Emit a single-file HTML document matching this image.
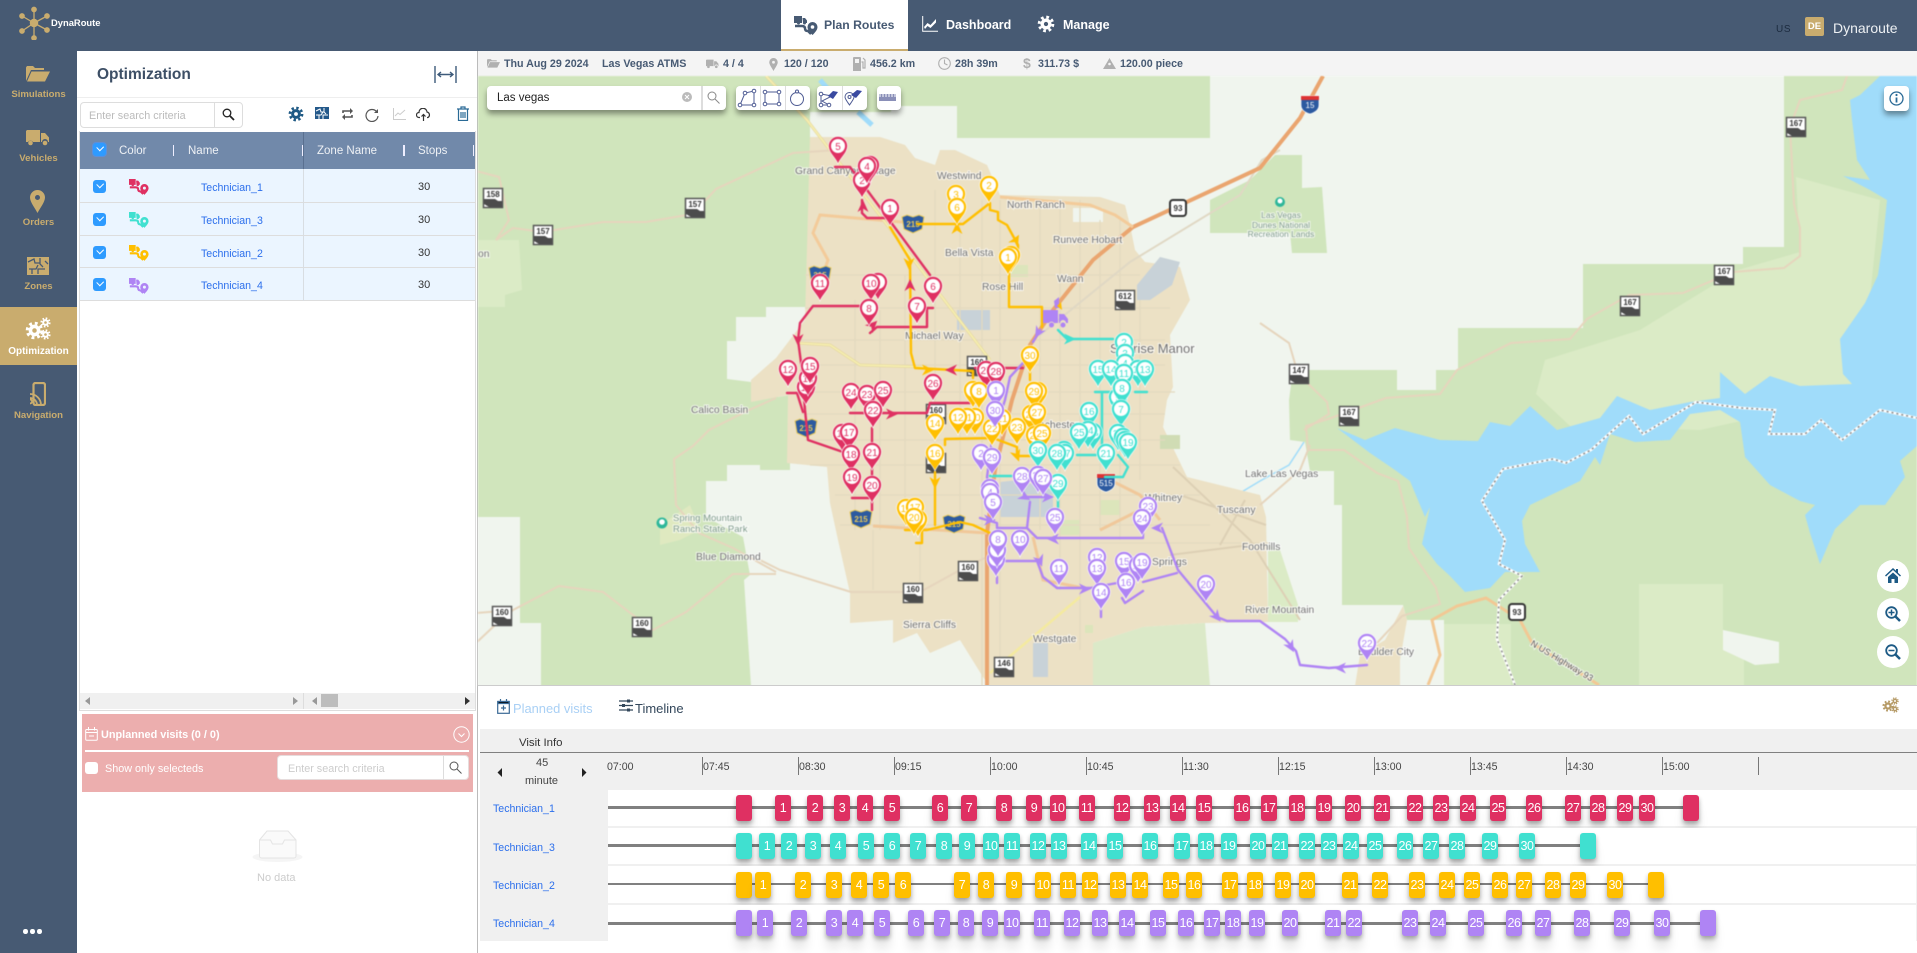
<!DOCTYPE html>
<html><head><meta charset="utf-8"><title>DynaRoute</title>
<style>
html,body{margin:0;padding:0}
body{position:relative;width:1917px;height:953px;overflow:hidden;background:#fff;font-family:"Liberation Sans",sans-serif;color:#333}
.a{position:absolute}
.t{position:absolute;white-space:nowrap;line-height:1;margin-top:1px}
svg{overflow:hidden}
.nav{font-weight:bold;font-size:12.5px;color:#fff}
.st{font-weight:bold;font-size:10.7px;color:#475a73;top:58px}
.sb{left:0;width:77px;text-align:center;font-weight:bold;font-size:9.6px;color:#c9ac6e}
.th{font-size:11.5px;color:#eef1f5;top:145px}
.sep{position:absolute;top:145px;height:11px;width:1px;background:#eef}
.tr{position:absolute;left:80px;width:395px;background:#ebf5ff;border-bottom:1.5px solid #ddd;box-sizing:border-box}
.cb{position:absolute;width:13px;height:13px;background:#2e9bff;border-radius:3px}
.cb:after{content:"";position:absolute;left:3.5px;top:2px;width:5px;height:3.5px;border-left:1.6px solid #fff;border-bottom:1.6px solid #fff;transform:rotate(-45deg)}
.tn{font-size:10.6px;color:#2c6fec}
.tk{position:absolute;top:757px;height:18px;width:1px;background:#777}
.tl{font-size:10.6px;color:#444;top:761px}
.r{position:absolute;left:608px;width:1308px;background:#fff}
.r i{position:absolute;left:0;height:3px;background:#808080}
.r b{position:absolute;width:16px;height:26px;border-radius:3px;color:#fff;font:normal 12.5px/26px "Liberation Sans",sans-serif;letter-spacing:-.4px;text-align:center;box-shadow:0 3px 5px rgba(0,0,0,.32),0 13px 10px rgba(0,0,0,.09)}
.r1 b{background:#df3062}.r2 b{background:#40e0d0}.r3 b{background:#ffbf00}.r4 b{background:#af84f4}
.M text{font:10px "Liberation Sans",sans-serif;text-anchor:middle}
.L text{font:10.3px "Liberation Sans",sans-serif;fill:#707070;paint-order:stroke;stroke:#fff;stroke-width:2px;stroke-opacity:.7}
.S text{font:bold 8px "Liberation Sans",sans-serif;text-anchor:middle;fill:#333}
.Y text{font:bold 8px "Liberation Sans",sans-serif;text-anchor:middle;fill:#e8c95a}
.W text{font:8px "Liberation Sans",sans-serif;text-anchor:middle;fill:#fff}
.rt{fill:none;stroke-width:2.4;stroke-linejoin:round;stroke-linecap:round}
.rd{fill:none;stroke:#e3d9bf;stroke-width:1.3}
.bt{position:absolute;background:#fff;box-shadow:0 4px 6px rgba(0,0,0,.4)}
</style></head><body>

<svg width="0" height="0" class="a"><defs>
<symbol id="ti" viewBox="0 0 24 20"><path fill="currentColor" d="M0 1h8v7H6a1.5 1.5 0 0 1-3 0H0zM8.5 3H11l2 2.5V8h-1a1.5 1.5 0 0 1-3 0z"/><path d="M1 11h7q3 0 3 2.5t3 2.5l3 3" fill="none" stroke="currentColor" stroke-width="2.5"/><path fill="currentColor" fill-rule="evenodd" d="M18.5 7a5 5 0 0 1 5 5c0 3-3 6-5 8-2-2-5-5-5-8a5 5 0 0 1 5-5zm0 3.2a1.8 1.8 0 1 0 0 3.6 1.8 1.8 0 0 0 0-3.6z"/></symbol>
<symbol id="gr" viewBox="-8 -8 16 16"><circle r="3.4" fill="none" stroke="currentColor" stroke-width="3"/><circle r="6.1" fill="none" stroke="currentColor" stroke-width="2.6" stroke-dasharray="2.4 2.4"/></symbol>
</defs></svg>

<!-- header -->
<div class="a" style="left:0;top:0;width:1917px;height:51px;background:#475a73"></div>
<svg class="a" style="left:18px;top:6px" width="32" height="34" viewBox="0 0 32 34"><g stroke="#c9ac6e" stroke-width="1.3" fill="#c9ac6e"><line x1="16" y1="17" x2="16" y2="3"/><line x1="16" y1="17" x2="4" y2="10"/><line x1="16" y1="17" x2="29" y2="10"/><line x1="16" y1="17" x2="4" y2="25"/><line x1="16" y1="17" x2="29" y2="24"/><line x1="16" y1="17" x2="16" y2="32"/><circle cx="16" cy="17" r="3.6"/><circle cx="16" cy="3.5" r="2.2"/><circle cx="4" cy="10" r="2.2"/><circle cx="29" cy="10" r="2.2"/><circle cx="4" cy="25" r="2.2"/><circle cx="29" cy="24" r="2.2"/><circle cx="16" cy="32" r="2.2"/></g></svg>
<div class="t" style="left:51px;top:17px;font-weight:bold;font-size:9.4px;color:#fff">DynaRoute</div>
<div class="a" style="left:781px;top:0;width:127px;height:49px;background:#fff;border-bottom:2px solid #c9ac6e"></div>
<svg class="a" style="left:794px;top:15px;color:#475a73" width="24" height="20"><use href="#ti"/></svg>
<div class="t nav" style="left:824px;top:18px;color:#475a73;font-size:12.2px">Plan Routes</div>
<svg class="a" style="left:922px;top:16px" width="16" height="16" viewBox="0 0 16 16"><path d="M.7 0v15.3H16" fill="none" stroke="#fff" stroke-width="1"/><path d="M2 11l3.5-4 3 2L14 3v3.5L8.500 12 5.500 10 3 13z" fill="#fff"/></svg>
<div class="t nav" style="left:946px;top:18px">Dashboard</div>
<svg class="a" style="left:1037px;top:15px;color:#fff" width="18" height="18"><use href="#gr"/></svg>
<div class="t nav" style="left:1063px;top:18px">Manage</div>
<div class="t" style="left:1776px;top:24px;font-size:10px;color:#1c2b3f;letter-spacing:.7px">US</div>
<div class="a" style="left:1805px;top:17px;width:19px;height:19px;background:#c9ac6e;border-radius:2px;color:#fff;font:bold 9.5px/19px 'Liberation Sans',sans-serif;text-align:center">DE</div>
<div class="t" style="left:1833px;top:20px;font-size:14px;color:#edf0f3">Dynaroute</div>

<!-- sidebar -->
<div class="a" style="left:0;top:51px;width:77px;height:902px;background:#475a73"></div>
<svg class="a" style="left:26px;top:66px" width="24" height="16" viewBox="0 0 24 16"><path d="M0 15V1.500L1 0h6l2 2h9v2H5zM5.500 5.500H24L19 15.500H1z" fill="#c9ac6e"/></svg>
<div class="t sb" style="top:89px">Simulations</div>
<svg class="a" style="left:26px;top:130px" width="24" height="16" viewBox="0 0 24 16"><path d="M1 0h13v12H7a3 3 0 0 0-5 0H0V1zM15 3h4l4 4.500V12h-1a3 3 0 0 0-6 0h-1z" fill="#c9ac6e"/><circle cx="4.500" cy="13" r="2.300" fill="#c9ac6e"/><circle cx="19" cy="13" r="2.300" fill="#c9ac6e"/></svg>
<div class="t sb" style="top:153px">Vehicles</div>
<svg class="a" style="left:30px;top:190px" width="15" height="23" viewBox="0 0 15 23"><path fill-rule="evenodd" fill="#c9ac6e" d="M7.500 0A7.500 7.500 0 0 1 15 7.500C15 12 10 18 7.500 23 5 18 0 12 0 7.500A7.500 7.500 0 0 1 7.500 0zm0 5a2.500 2.500 0 1 0 0 5 2.500 2.500 0 0 0 0-5z"/></svg>
<div class="t sb" style="top:217px">Orders</div>
<svg class="a" style="left:27px;top:257px" width="22" height="19" viewBox="0 0 22 19"><rect width="22" height="18" fill="#c9ac6e"/><path d="M1 5l6-3 1 4 5 0M13 1v6l3 3M2 12h7l2-4M11 17v-5l7 0M5 12v5M18 4l3 3" stroke="#475a73" stroke-width="1.300" fill="none"/></svg>
<div class="t sb" style="top:281px">Zones</div>
<div class="a" style="left:0;top:307px;width:77px;height:58px;background:#c9ac6e"></div>
<svg class="a" style="left:24px;top:316px;color:#fff" width="28" height="26" viewBox="0 0 28 26"><use href="#gr" x="1" y="5" width="19" height="19"/><use href="#gr" x="16" y="1" width="11" height="11"/><use href="#gr" x="16" y="13" width="11" height="11"/></svg>
<div class="t sb" style="top:346px;color:#fff;font-size:10px">Optimization</div>
<svg class="a" style="left:30px;top:382px" width="16" height="24" viewBox="0 0 16 24"><rect x="3.500" y="1" width="11.500" height="22" rx="2" fill="none" stroke="#c9ac6e" stroke-width="2.200"/><path d="M0 21.500a2 2 0 1 1 .1 0zM0 16a7 7 0 0 1 7 7M0 12a11 11 0 0 1 11 11" stroke="#c9ac6e" stroke-width="1.800" fill="#c9ac6e" fill-opacity="0"/></svg>
<div class="t sb" style="top:410px">Navigation</div>
<div class="a" style="left:23px;top:929px;width:4.500px;height:4.500px;border-radius:50%;background:#fff"></div>
<div class="a" style="left:30px;top:929px;width:4.500px;height:4.500px;border-radius:50%;background:#fff"></div>
<div class="a" style="left:37px;top:929px;width:4.500px;height:4.500px;border-radius:50%;background:#fff"></div>

<!-- left panel -->
<div class="a" style="left:77px;top:51px;width:400px;height:902px;background:#fff;border-right:1px solid #bbb;box-sizing:content-box"></div>
<div class="t" style="left:97px;top:66px;font-weight:bold;font-size:15.500px;color:#3d4f66">Optimization</div>
<svg class="a" style="left:434px;top:66px" width="23" height="18" viewBox="0 0 23 18"><path d="M1 0v17M22 0v17M4 8.500h15M7 6l-3 2.500L7 11M16 6l3 2.500-3 2.500" stroke="#3d5a7a" stroke-width="1.400" fill="none"/></svg>
<div class="a" style="left:77px;top:97px;width:400px;height:1px;background:#eee"></div>
<div class="a" style="left:80px;top:102px;width:163px;height:26px;border:1px solid #ddd;border-radius:4px;box-sizing:border-box"></div>
<div class="a" style="left:214px;top:103px;width:1px;height:24px;background:#ddd"></div>
<div class="t" style="left:89px;top:110px;font-size:10.800px;color:#bbb">Enter search criteria</div>
<svg class="a" style="left:222px;top:108px" width="13" height="13" viewBox="0 0 13 13"><circle cx="5" cy="5" r="3.800" fill="none" stroke="#222" stroke-width="1.300"/><path d="M8 8l4 4" stroke="#222" stroke-width="1.800"/></svg>
<svg class="a" style="left:288px;top:106px;color:#1f5a85" width="16" height="16"><use href="#gr"/></svg>
<svg class="a" style="left:315px;top:107px" width="14" height="13" viewBox="0 0 14 13"><rect width="14" height="12" fill="#24598a"/><path d="M1 4l4-2 1 3h3M9 1v4l2 2M1 8h5l2-3M8 12V8h5M4 8v4" stroke="#fff" stroke-width="1" fill="none"/></svg>
<svg class="a" style="left:341px;top:108px" width="13" height="12" viewBox="0 0 13 12"><path d="M2 5V3h8M11 7v2H3" stroke="#555" stroke-width="1.600" fill="none"/><path d="M9 0l3 3-3 3zM4 6L1 9l3 3z" fill="#555"/></svg>
<svg class="a" style="left:365px;top:108px" width="14" height="14" viewBox="0 0 14 14"><path d="M11.500 3.500A6 6 0 1 0 13 8" stroke="#555" stroke-width="1.200" fill="none"/><path d="M13 1v4H9z" fill="#555"/></svg>
<svg class="a" style="left:393px;top:108px" width="13" height="12" viewBox="0 0 13 12"><path d="M.5 0v11.500H13M2 8l3-3 2 1.500L12 2" stroke="#ccc" stroke-width="1" fill="none"/></svg>
<svg class="a" style="left:416px;top:108px" width="15" height="13" viewBox="0 0 15 13"><path d="M4 9.500H3a2.500 2.500 0 0 1 0-5 4 4 0 0 1 8-.5 3 3 0 0 1 1 5.500h-1M7.500 6v7M5.500 8.500l2-2 2 2" stroke="#333" stroke-width="1.200" fill="none"/></svg>
<svg class="a" style="left:457px;top:106px" width="12" height="15" viewBox="0 0 12 15"><path d="M0 3h12M4 3V1h4v2M1.500 3.500v11h9v-11M4 6v6M6 6v6M8 6v6" stroke="#2a6a96" stroke-width="1.200" fill="none"/></svg>

<div class="a" style="left:79px;top:131px;width:397px;height:580px;border:1px solid #ddd;border-top:0;box-sizing:border-box"></div>
<div class="a" style="left:80px;top:132px;width:395px;height:37px;background:#7189aa"></div>
<div class="a" style="left:303px;top:132px;width:1px;height:37px;background:#5a7090"></div>
<div class="cb" style="left:93px;top:143px;outline:1px solid #5a8fdc"></div>
<div class="t th" style="left:119px">Color</div><div class="sep" style="left:173px"></div>
<div class="t th" style="left:188px">Name</div><div class="sep" style="left:302px"></div>
<div class="t th" style="left:317px">Zone Name</div><div class="sep" style="left:403px;width:2px"></div>
<div class="t th" style="left:418px">Stops</div><div class="sep" style="left:473px"></div>

<div class="tr" style="top:169px;height:34px"></div><div class="tr" style="top:203px;height:33px"></div><div class="tr" style="top:236px;height:32px"></div><div class="tr" style="top:268px;height:33px"></div>
<div class="a" style="left:303px;top:169px;width:1px;height:132px;background:#d8dde2"></div>

<div class="cb" style="left:93px;top:180px"></div><div class="cb" style="left:93px;top:213px"></div><div class="cb" style="left:93px;top:246px"></div><div class="cb" style="left:93px;top:278px"></div>
<svg class="a" style="left:129px;top:178px;color:#df3062" width="20" height="17"><use href="#ti"/></svg>
<svg class="a" style="left:129px;top:211px;color:#40e0d0" width="20" height="17"><use href="#ti"/></svg>
<svg class="a" style="left:129px;top:244px;color:#ffbf00" width="20" height="17"><use href="#ti"/></svg>
<svg class="a" style="left:129px;top:277px;color:#af84f4" width="20" height="17"><use href="#ti"/></svg>
<div class="t tn" style="left:201px;top:182px">Technician_1</div><div class="t" style="left:418px;top:181px;font-size:11px">30</div>
<div class="t tn" style="left:201px;top:215px">Technician_3</div><div class="t" style="left:418px;top:214px;font-size:11px">30</div>
<div class="t tn" style="left:201px;top:248px">Technician_2</div><div class="t" style="left:418px;top:247px;font-size:11px">30</div>
<div class="t tn" style="left:201px;top:280px">Technician_4</div><div class="t" style="left:418px;top:279px;font-size:11px">30</div>

<div class="a" style="left:80px;top:693px;width:395px;height:16px;background:#f0f0f0"></div>
<div class="a" style="left:303px;top:693px;width:1px;height:16px;background:#ddd"></div>
<svg class="a" style="left:84px;top:696px" width="390" height="10" viewBox="0 0 390 10"><path d="M6 1L1 5l5 4z" fill="#999"/><path d="M209 1l5 4-5 4z" fill="#999"/><path d="M233 1l-5 4 5 4z" fill="#999"/><path d="M381 1l5 4-5 4z" fill="#333"/></svg>
<div class="a" style="left:321px;top:694px;width:17px;height:13px;background:#bdbdbd"></div>

<div class="a" style="left:82px;top:714px;width:391px;height:78px;background:#ecaeae"></div>
<svg class="a" style="left:85px;top:727px" width="13" height="14" viewBox="0 0 13 14"><rect x=".7" y="2.500" width="11.600" height="10.800" rx="1" fill="none" stroke="#fff" stroke-width="1"/><path d="M1 5.500h11M3.500 0v3.500M9.500 0v3.500M4 9h5" stroke="#fff" stroke-width="1"/></svg>
<div class="t" style="left:101px;top:729px;font-weight:bold;font-size:10.900px;color:#fff">Unplanned visits (0 / 0)</div>
<svg class="a" style="left:453px;top:726px" width="17" height="17" viewBox="0 0 17 17"><circle cx="8.500" cy="8.500" r="7.700" fill="none" stroke="#fff" stroke-width="1"/><path d="M5.500 7.500l3 3 3-3" fill="none" stroke="#fff" stroke-width="1"/></svg>
<div class="a" style="left:85px;top:750px;width:384px;height:2px;background:#fff"></div>
<div class="a" style="left:85px;top:762px;width:13px;height:12px;background:#fff;border-radius:3px"></div>
<div class="t" style="left:105px;top:763px;font-size:10.800px;color:#fff">Show only selecteds</div>
<div class="a" style="left:277px;top:755px;width:192px;height:25px;background:#fff;border-radius:4px;border:1px solid #e6dcdc;box-sizing:border-box"></div>
<div class="a" style="left:443px;top:756px;width:1px;height:23px;background:#ddd"></div>
<div class="t" style="left:288px;top:763px;font-size:10.800px;color:#ccc">Enter search criteria</div>
<svg class="a" style="left:449px;top:761px" width="13" height="13" viewBox="0 0 13 13"><circle cx="5" cy="5" r="4" fill="none" stroke="#555" stroke-width="1"/><path d="M8 8l4.500 4.500" stroke="#555" stroke-width="1"/></svg>

<svg class="a" style="left:252px;top:829px" width="52" height="34" viewBox="0 0 52 34"><ellipse cx="25.500" cy="28" rx="25" ry="5" fill="#f5f5f5"/><path d="M7.500 11L15 2h21l8 9v16a2 2 0 0 1-2 2H9.500a2 2 0 0 1-2-2z" fill="#fafafa" stroke="#e4e4e4" stroke-width="1"/><path d="M7.500 11h11l2 4h10l2-4h11.500" fill="none" stroke="#e4e4e4" stroke-width="1"/></svg>
<div class="t" style="left:257px;top:872px;font-size:11px;color:#ccc">No data</div>

<!-- status bar -->
<div class="a" style="left:478px;top:51px;width:1439px;height:25px;background:#f4f4f4"></div>
<svg class="a" style="left:487px;top:58px" width="13" height="11" viewBox="0 0 24 16"><path d="M0 15V1.500L1 0h6l2 2h9v2H5zM5.500 5.500H24L19 15.500H1z" fill="#b0b0b0"/></svg>
<div class="t st" style="left:504px">Thu Aug 29 2024</div><div class="t st" style="left:602px">Las Vegas ATMS</div>
<svg class="a" style="left:706px;top:59px" width="13" height="10" viewBox="0 0 24 16"><path d="M1 0h13v12H7a3 3 0 0 0-5 0H0V1zM15 3h4l4 4.500V12h-1a3 3 0 0 0-6 0h-1z" fill="#b0b0b0"/><circle cx="4.500" cy="13" r="2.500" fill="#b0b0b0"/><circle cx="19" cy="13" r="2.500" fill="#b0b0b0"/></svg>
<div class="t st" style="left:723px">4 / 4</div>
<svg class="a" style="left:769px;top:58px" width="9" height="13" viewBox="0 0 15 23"><path fill-rule="evenodd" fill="#b0b0b0" d="M7.500 0A7.500 7.500 0 0 1 15 7.500C15 12 10 18 7.500 23 5 18 0 12 0 7.500A7.500 7.500 0 0 1 7.500 0zm0 5a2.500 2.500 0 1 0 0 5 2.500 2.500 0 0 0 0-5z"/></svg>
<div class="t st" style="left:784px">120 / 120</div>
<svg class="a" style="left:853px;top:57px" width="13" height="14" viewBox="0 0 13 14"><path d="M0 1a1 1 0 0 1 1-1h6a1 1 0 0 1 1 1v13H0zM2 2v4h4V2z" fill="#b0b0b0" fill-rule="evenodd"/><path d="M8.500 5h1.500v6h2V3L10 1" fill="none" stroke="#b0b0b0" stroke-width="1.200"/></svg>
<div class="t st" style="left:870px">456.2 km</div>
<svg class="a" style="left:938px;top:57px" width="13" height="13" viewBox="0 0 13 13"><circle cx="6.500" cy="6.500" r="5.800" fill="none" stroke="#b0b0b0" stroke-width="1.100"/><path d="M6.500 2.500v4l3 1.500" fill="none" stroke="#b0b0b0" stroke-width="1.100"/></svg>
<div class="t st" style="left:955px">28h 39m</div>
<div class="t" style="left:1023px;top:55px;font-size:14px;font-weight:bold;color:#b0b0b0">$</div>
<div class="t st" style="left:1038px">311.73 $</div>
<svg class="a" style="left:1103px;top:58px" width="13" height="11" viewBox="0 0 13 11"><path d="M4.500 3.500L6.500 0l2 3.500L13 11H0z" fill="#b0b0b0"/><circle cx="6.500" cy="6" r="1.300" fill="#f4f4f4"/></svg>
<div class="t st" style="left:1120px">120.00 piece</div>

<!-- map -->
<svg class="a" style="left:478px;top:76px;filter:blur(.4px)" width="1439" height="610" viewBox="478 76 1439 610">
<defs>
<g id="m"><path stroke="#fff" stroke-width=".6" d="M0 0C-2-6-9.500-11-9.500-18A9.500 9.500 0 1 1 9.500-18C9.500-11 2-6 0 0Z"/><circle cy="-18" r="7" fill="#fff"/></g>
<path id="ar" d="M-6-5.500L6 0-6 5.500-2.500 0Z"/>
<g id="sh"><rect x="-9.500" y="-9.500" width="19" height="19" fill="#fff" stroke="#555" stroke-width="1.500"/><path d="M-9 1H2L5 3 9 3V9H-4L-9 6Z" fill="#4c4c4c"/></g>
<path id="bl" d="M-11-7L-6-9 0-7 6-9 11-7 9 5 0 9-9 5Z" fill="#2c5aa0" stroke="#e8c95a" stroke-width="1"/>
<g id="in"><path d="M-9-8H9V1C9 7 3 9 0 10-3 9-9 7-9 1Z" fill="#2c5aa0" stroke="#fff" stroke-width=".7"/><path d="M-9-8H9V-4H-9Z" fill="#d33"/></g>
</defs>
<rect x="478" y="76" width="1439" height="610" fill="#f0f5ee"/>
<g fill="#d0e5bc">
<polygon points="477,76 891,76 891,112 810,112 810,307 766,307 766,317 736,317 736,341 727,341 727,379 751,382 787,402 787,465 727,465 727,481 706,481 706,517 743,537 750,575 744,580 751,686 541,686 541,623 520,623 520,517 477,517"/>
<polygon points="891,76 1210,76 1210,138 957,138 957,106 891,106"/>
<polygon points="1275,155 1302,155 1302,188 1322,187 1327,253 1292,253 1290,233 1210,233 1210,200 1250,180"/>
<polygon points="1784,76 1784,247 1743,247 1743,264 1583,264 1583,328 1458,328 1458,370 1436,370 1436,390 1397,390 1397,370 1293,370 1289,400 1290,440 1305,442 1310,471 1334,471 1334,505 1342,505 1342,605 1403,605 1407,620 1444,620 1444,686 1917,686 1917,76"/>
<polygon points="760,400 790,395 790,470 760,470" />
</g>
<g fill="#dbebc6">
<polygon points="478,240 519,240 522,290 505,295 505,307 478,307"/>
<polygon points="1880,200 1796,177 1800,252 1738,270 1640,330 1545,360 1536,394 1570,426 1700,430 1860,395"/>
<polygon points="1639,584 1723,584 1723,630 1744,640 1744,686 1639,686"/>
<polygon points="1444,624 1511,624 1511,686 1444,686"/>
<polygon points="1268,545 1280,550 1298,605 1298,622 1268,622"/>
</g>
<polygon points="1723,630 1779,642 1779,663 1755,665 1723,650" fill="#f0f5ee"/>
<polygon points="660,525 690,505 700,530 680,540 660,545" fill="#dfe9c0"/>
<!-- lake -->
<polygon fill="#a0dcfa" points="1880,76 1860,95 1850,100 1852,120 1857,160 1870,180 1843,176 1870,190 1887,200 1883,240 1878,275 1865,303 1840,339 1843,374 1852,384 1800,386 1770,376 1745,394 1720,372 1720,398 1690,402 1650,410 1617,396 1600,418 1557,430 1530,406 1510,426 1490,422 1478,441 1440,440 1395,428 1365,440 1337,428 1370,453 1395,470 1410,481 1420,505 1425,517 1430,507 1422,544 1437,564 1450,576 1465,592 1490,588 1505,572 1540,572 1525,544 1522,521 1530,505 1555,493 1580,481 1595,457 1600,465 1610,434 1635,442 1670,440 1690,414 1720,410 1740,422 1745,457 1770,485 1800,501 1815,505 1805,515 1810,533 1820,564 1835,529 1860,505 1885,505 1905,477 1900,461 1917,446 1917,76"/>
<path d="M820 80L835 97M858 112L872 125" stroke="#a0dcfa" stroke-width="5" fill="none"/>
<path d="M1173 467L1200 488 1240 493 1260 481 1289 465 1304 442" stroke="#a0dcfa" stroke-width="1.500" fill="none"/>
<!-- city -->
<polygon fill="#ece1c5" points="810,137 880,137 905,145 915,158 935,165 940,150 955,150 987,165 1000,195 1100,197 1125,205 1130,225 1135,250 1145,262 1180,267 1190,300 1170,335 1173,387 1167,400 1163,427 1187,477 1260,495 1266,517 1268,622 1205,623 1143,627 1093,643 1093,686 990,686 983,677 960,640 930,653 917,633 893,643 893,620 850,623 850,593 838,540 830,503 827,467 787,463 788,395 751,402 751,380 776,358 805,320"/>
<polygon fill="#ece1c5" points="1403,606 1385,640 1360,655 1355,686 1400,686 1400,660 1407,620"/>
<polygon fill="#dbe9c8" points="1093,643 1143,627 1205,623 1210,686 1093,686"/>
<polygon fill="#f0f5ee" points="1073,208 1103,208 1103,222 1073,222"/>
<g fill="#c8d2d8">
<polygon points="1137,285 1160,257 1180,262 1172,285 1150,300 1137,300"/>
<rect x="957" y="310" width="33" height="20"/>
<polygon points="1000,482 1018,480 1053,490 1053,517 1000,517"/>
<rect x="1033" y="643" width="15" height="34"/>
</g>
<g fill="#dce5bb"><rect x="1010" y="265" width="18" height="12"/><rect x="1060" y="520" width="20" height="15"/><rect x="1100" y="500" width="20" height="15"/><rect x="1160" y="435" width="20" height="14" fill="#d0dcb4"/><rect x="1085" y="625" width="8" height="8"/></g>
<!-- grid -->
<g class="rd">
<path d="M805 275H1140M805 308H1170M800 340H1165M800 365H1165M795 392H1175M800 414H1165M805 440H1165M810 465H1180M835 495H1200M840 525H1210M1090 543H1270"/>
<path d="M855 300V530M880 310V530M905 275V530M935 190V530M960 200V520M982 200V690M1000 200V670M1040 200V530M1060 200V590M1080 200V650M1100 220V530M1120 220V540M1140 300V480M873 530V590M920 530V590"/>
</g>
<g fill="none">
<path d="M1040 335L1130 262 1240 195 1262 160 1280 150" stroke="#e0d8c4" stroke-width="2"/>
<path d="M1173 467L1250 540 1300 620" stroke="#ddd0b5" stroke-width="2"/>
<path d="M1180 495L1266 525M1220 545L1245 500M1170 555L1250 545" stroke="#ddd0b5" stroke-width="2"/>
<g stroke="#e6d5bd" stroke-width="2">
<path d="M476 171L499 177 509 220 496 240 513 228 543 232 603 222 646 222 693 214 716 189 776 161 793 153 837 150"/>
<path d="M776 398L749 410 709 430 693 446 674 459 676 505 699 533 733 548 776 572"/>
<path d="M851 592L780 570 760 560M776 574H733L686 612 653 630 629 612 603 592 559 586 513 610 476 613M476 643L493 627 513 610"/>
<path d="M850 592H920L960 570 987 557"/>
<path d="M1847 76L1842 90 1800 100 1790 127 1794 204 1800 228 1800 256 1784 268 1733 272 1683 293 1629 295 1587 319 1570 339 1511 343 1457 370 1440 394 1386 398 1331 418 1306 426 1308 450 1344 450 1377 473 1398 481 1407 517 1409 548 1436 588 1440 604 1402 616 1377 643"/>
<path d="M1260 323L1289 343 1298 374 1327 402 1329 414 1304 430"/>
<path d="M1260 505L1300 470 1310 445"/>
</g>
<path d="M1323 76L1300 118 1260 168 1133 227 1093 260 1053 310 1030 345 1012 400 995 470 987 533 987 686" stroke="#eaa56f" stroke-width="4"/>
<path d="M913 223L820 215 813 233 828 260 820 283M1000 197L1090 205 1115 215 1133 227" stroke="#f3cb9a" stroke-width="3"/>
<path d="M873 526L987 533M1033 537L1043 580 1083 588M1100 530L1150 505 1155 510" stroke="#f0c89a" stroke-width="3"/>
<path d="M1106 478L1140 495 1160 520" stroke="#f0c89a" stroke-width="3"/>
<path d="M766 76L807 120 990 360M797 343L830 345 860 365 927 367" stroke="#e6d8a0" stroke-width="3"/>
<path d="M766 76L807 120 990 360M797 343L830 345 860 365 927 367" stroke="#f6efb0" stroke-width="1.600"/>
<path d="M1080 597L990 673" stroke="#f4ea9f" stroke-width="2.500"/>
<path d="M1428 685L1440 655 1432 620 1457 606 1486 598 1520 620 1532 643 1599 685" stroke="#f2c894" stroke-width="3"/>
<path d="M1515 685L1497 639 1499 600 1522 576 1499 564 1505 540 1482 501 1503 469 1553 459 1566 463 1591 450 1629 416 1643 434 1696 402 1742 408 1775 410 1769 434 1805 434 1821 420 1842 440 1880 410 1917 418" stroke="#fff" stroke-width="2.500"/>
<path d="M1515 685L1497 639 1499 600 1522 576 1499 564 1505 540 1482 501 1503 469 1553 459 1566 463 1591 450 1629 416 1643 434 1696 402 1742 408 1775 410 1769 434 1805 434 1821 420 1842 440 1880 410 1917 418" stroke="#888" stroke-width="1.500" stroke-dasharray="2 3"/>
</g>
<!-- shields -->
<g class="S">
<use href="#sh" x="493" y="198"/><text x="493" y="197">158</text>
<use href="#sh" x="543" y="235"/><text x="543" y="234">157</text>
<use href="#sh" x="695" y="208"/><text x="695" y="207">157</text>
<use href="#sh" x="502" y="616"/><text x="502" y="615">160</text>
<use href="#sh" x="642" y="627"/><text x="642" y="626">160</text>
<use href="#sh" x="968" y="571"/><text x="968" y="570">160</text>
<use href="#sh" x="913" y="593"/><text x="913" y="592">160</text>
<use href="#sh" x="1004" y="667"/><text x="1004" y="666">146</text>
<use href="#sh" x="1125" y="300"/><text x="1125" y="299">612</text>
<use href="#sh" x="1796" y="127"/><text x="1796" y="126">167</text>
<use href="#sh" x="1724" y="275"/><text x="1724" y="274">167</text>
<use href="#sh" x="1630" y="306"/><text x="1630" y="305">167</text>
<use href="#sh" x="1349" y="416"/><text x="1349" y="415">167</text>
<use href="#sh" x="1299" y="374"/><text x="1299" y="373">147</text>
<use href="#sh" x="977" y="366"/><text x="977" y="365">160</text>
<use href="#sh" x="936" y="414"/><text x="936" y="413">160</text>
<use href="#sh" x="936" y="463"/><text x="936" y="462">160</text>
<rect x="1170" y="200" width="16" height="16" rx="3" fill="#fff" stroke="#333" stroke-width="2"/><text x="1178" y="211">93</text>
<rect x="1509" y="604" width="16" height="16" rx="3" fill="#fff" stroke="#333" stroke-width="2"/><text x="1517" y="615">93</text>
</g>
<g class="Y">
<use href="#bl" x="913" y="224"/><text x="913" y="227">215</text>
<use href="#bl" x="820" y="275"/><text x="820" y="278">215</text>
<use href="#bl" x="806" y="428"/><text x="806" y="431">215</text>
<use href="#bl" x="861" y="519"/><text x="861" y="522">215</text>
<use href="#bl" x="954" y="524"/><text x="954" y="527">215</text>
</g>
<g class="W"><use href="#in" x="1310" y="104"/><text x="1310" y="108">15</text><use href="#in" x="1106" y="482"/><text x="1106" y="486">515</text></g>
<!-- labels -->
<g class="L">
<text x="795" y="174">Grand Canyon Village</text>
<text x="937" y="179">Westwind</text>
<text x="1007" y="208">North Ranch</text>
<text x="1053" y="243">Runvee Hobart</text>
<text x="945" y="256">Bella Vista</text>
<text x="1057" y="282">Wann</text>
<text x="982" y="290">Rose Hill</text>
<text x="905" y="339">Michael Way</text>
<text x="1110" y="353" style="font-size:13px">Sunrise Manor</text>
<text x="1027" y="428">Winchester</text>
<text x="1145" y="501">Whitney</text>
<text x="1217" y="513">Tuscany</text>
<text x="1245" y="477">Lake Las Vegas</text>
<text x="1242" y="550">Foothills</text>
<text x="1152" y="565">Springs</text>
<text x="1245" y="613">River Mountain</text>
<text x="903" y="628">Sierra Cliffs</text>
<text x="1033" y="642">Westgate</text>
<text x="1358" y="655">Boulder City</text>
<text x="691" y="413">Calico Basin</text>
<text x="696" y="560">Blue Diamond</text>
<text x="478" y="257">on</text>
<text x="673" y="521" style="font-size:9.500px;fill:#7d9a8a">Spring Mountain</text>
<text x="673" y="532" style="font-size:9.500px;fill:#7d9a8a">Ranch State Park</text>
<text x="1281" y="218" text-anchor="middle" style="font-size:8.500px;fill:#7d9a8a">Las Vegas</text>
<text x="1281" y="228" text-anchor="middle" style="font-size:8.500px;fill:#7d9a8a">Dunes National</text>
<text x="1281" y="237" text-anchor="middle" style="font-size:8.500px;fill:#7d9a8a">Recreation Lands</text>
<text transform="translate(1530 645) rotate(31)" style="font-size:9px;fill:#555">N US Highway 93</text>
</g>
<circle cx="1280" cy="202" r="5" fill="#2fb79a"/><circle cx="1280" cy="201" r="2.500" fill="#fff"/>
<circle cx="662" cy="523" r="5.500" fill="#2fb79a"/><circle cx="662" cy="522" r="2.800" fill="#fff"/>

<!-- routes -->
<g class="rt" stroke="#df3062">
<path d="M835 167H850L930 275M862 200V213L867 218H890"/>
<path d="M862 306H813L800 323 798 340 802 370 805 410 808 440 843 452"/>
<path d="M870 333L877 327H927V308H933"/>
<path d="M787 393H797L803 412M850 413H927L930 403H973M975 368H1023M872 428V477M872 480V510M852 498H872"/>
</g>
<g class="rt" stroke="#ffbf00">
<path d="M917 224H963L990 203V210L998 212V220L1007 225 1018 245V260"/>
<path d="M890 227L910 260 911 353 915 368 973 371V378"/>
<path d="M1009 273V307H1042V327M1030 370V380"/>
<path d="M945 445V439L993 438 1017 447V456H1037"/>
<path d="M935 472V525M905 530H927L960 522 973 525 990 533M916 543H922V530"/>
</g>
<g class="rt" stroke="#40e0d0">
<path d="M1058 330L1067 339H1113M1095 392H1110M1135 392H1147M1102 393V453"/>
<path d="M990 476H1020M1077 455H1100M1118 455L1128 467 1123 477H1105M1058 500V507"/>
</g>
<g class="rt" stroke="#af84f4">
<path d="M1040 330L1033 342M1023 363L1010 377 1005 400 992 440 987 477 990 487"/>
<path d="M980 518L997 523V528H1027L1037 538H1143V533M1030 502L1027 528M1023 497H1050"/>
<path d="M1005 561H1037L1043 577 1057 588H1090L1117 583M997 577V583M1101 610V617"/>
<path d="M1122 598L1125 603 1143 591M1143 582L1177 573"/>
<path d="M1162 528L1178 570 1217 617 1227 621H1260L1285 639 1296 651 1300 665 1329 668 1367 665"/>
</g>
<!-- arrows -->
<g fill="#df3062">
<use href="#ar" transform="translate(863 206) rotate(-90)"/><use href="#ar" transform="translate(798 340) rotate(90)"/><use href="#ar" transform="translate(873 325) rotate(-45)"/><use href="#ar" transform="translate(892 414)"/><use href="#ar" transform="translate(951 370) rotate(180)"/><use href="#ar" transform="translate(910 285) rotate(-90)"/>
</g>
<g fill="#ffbf00">
<use href="#ar" transform="translate(957 228) rotate(-90)"/><use href="#ar" transform="translate(1016 240) rotate(-60)"/><use href="#ar" transform="translate(909 264) rotate(90)"/><use href="#ar" transform="translate(928 370)"/><use href="#ar" transform="translate(935 483) rotate(90)"/><use href="#ar" transform="translate(1017 456) rotate(70)"/>
</g>
<use href="#ar" fill="#40e0d0" transform="translate(1070 339)"/>
<g fill="#af84f4">
<use href="#ar" transform="translate(1038 333) rotate(120)"/><use href="#ar" transform="translate(1025 497) rotate(30)"/><use href="#ar" transform="translate(1048 497)"/><use href="#ar" transform="translate(990 520)"/><use href="#ar" transform="translate(1040 561) rotate(70)"/><use href="#ar" transform="translate(1085 589)"/><use href="#ar" transform="translate(1157 528) rotate(180)"/><use href="#ar" transform="translate(1053 539) rotate(180)"/><use href="#ar" transform="translate(1217 617) rotate(50)"/><use href="#ar" transform="translate(1291 647) rotate(60)"/><use href="#ar" transform="translate(1340 668) rotate(180)"/>
</g>
<!-- truck -->
<path d="M1043 310h15v13h-4a3 3 0 0 0-5 0h-6zM1059 314h5l4 5v4h-2a3 3 0 0 0-6 0h-1z" fill="#af84f4"/><circle cx="1051.500" cy="325" r="2.500" fill="#af84f4"/><circle cx="1063" cy="325" r="2.500" fill="#af84f4"/><path d="M1054 301l5-4v11h-4z" fill="#af84f4"/><path d="M1057 306l4-4 1 8z" fill="#ffbf00"/>

<!-- markers -->
<g class="M" fill="#df3062">
<use href="#m" x="838" y="164"/><text x="838" y="150">5</text>
<use href="#m" x="862" y="198"/><text x="862" y="184">2</text>
<use href="#m" x="870" y="183"/><text x="870" y="169">3</text>
<use href="#m" x="867" y="184"/><text x="867" y="170">4</text>
<use href="#m" x="890" y="226"/><text x="890" y="212">1</text>
<use href="#m" x="933" y="304"/><text x="933" y="290">6</text>
<use href="#m" x="820" y="301"/><text x="820" y="287">11</text>
<use href="#m" x="878" y="300"/><text x="878" y="286">9</text>
<use href="#m" x="871" y="301"/><text x="871" y="287">10</text>
<use href="#m" x="869" y="326"/><text x="869" y="312">8</text>
<use href="#m" x="917" y="324"/><text x="917" y="310">7</text>
<use href="#m" x="788" y="387"/><text x="788" y="373">12</text>
<use href="#m" x="806" y="405"/><text x="806" y="391">13</text>
<use href="#m" x="808" y="396"/><text x="808" y="382">14</text>
<use href="#m" x="810" y="384"/><text x="810" y="370">15</text>
<use href="#m" x="851" y="410"/><text x="851" y="396">24</text>
<use href="#m" x="867" y="412"/><text x="867" y="398">23</text>
<use href="#m" x="883" y="408"/><text x="883" y="394">25</text>
<use href="#m" x="873" y="428"/><text x="873" y="414">22</text>
<use href="#m" x="933" y="401"/><text x="933" y="387">26</text>
<use href="#m" x="986" y="388"/><text x="986" y="374">27</text>
<use href="#m" x="996" y="389"/><text x="996" y="375">28</text>
<use href="#m" x="842" y="451"/><text x="842" y="437">16</text>
<use href="#m" x="849" y="450"/><text x="849" y="436">17</text>
<use href="#m" x="851" y="472"/><text x="851" y="458">18</text>
<use href="#m" x="872" y="470"/><text x="872" y="456">21</text>
<use href="#m" x="852" y="495"/><text x="852" y="481">19</text>
<use href="#m" x="872" y="503"/><text x="872" y="489">20</text>
</g>
<g class="M" fill="#ffbf00">
<use href="#m" x="956" y="212"/><text x="956" y="198">3</text>
<use href="#m" x="957" y="225"/><text x="957" y="211">6</text>
<use href="#m" x="989" y="203"/><text x="989" y="189">2</text>
<use href="#m" x="1011" y="273"/><text x="1011" y="259">4</text>
<use href="#m" x="1008" y="275"/><text x="1008" y="261">1</text>
<use href="#m" x="1030" y="373"/><text x="1030" y="359">30</text>
<use href="#m" x="1038" y="409"/><text x="1038" y="395">28</text>
<use href="#m" x="1034" y="409"/><text x="1034" y="395">29</text>
<use href="#m" x="1031" y="432"/><text x="1031" y="418">26</text>
<use href="#m" x="1037" y="430"/><text x="1037" y="416">27</text>
<use href="#m" x="1035" y="453"/><text x="1035" y="439">24</text>
<use href="#m" x="1042" y="451"/><text x="1042" y="437">25</text>
<use href="#m" x="1017" y="445"/><text x="1017" y="431">23</text>
<use href="#m" x="1002" y="436"/><text x="1002" y="422">21</text>
<use href="#m" x="992" y="446"/><text x="992" y="432">22</text>
<use href="#m" x="973" y="408"/><text x="973" y="394">7</text>
<use href="#m" x="979" y="409"/><text x="979" y="395">8</text>
<use href="#m" x="975" y="435"/><text x="975" y="421">10</text>
<use href="#m" x="967" y="435"/><text x="967" y="421">11</text>
<use href="#m" x="958" y="435"/><text x="958" y="421">12</text>
<use href="#m" x="935" y="441"/><text x="935" y="427">14</text>
<use href="#m" x="935" y="471"/><text x="935" y="457">16</text>
<use href="#m" x="906" y="526"/><text x="906" y="512">18</text>
<use href="#m" x="915" y="525"/><text x="915" y="511">17</text>
<use href="#m" x="918" y="537"/><text x="918" y="523">19</text>
<use href="#m" x="914" y="535"/><text x="914" y="521">20</text>
</g>
<g class="M" fill="#40e0d0">
<use href="#m" x="1124" y="360"/><text x="1124" y="346">2</text>
<use href="#m" x="1125" y="371"/><text x="1125" y="357">3</text>
<use href="#m" x="1125" y="381"/><text x="1125" y="367">4</text>
<use href="#m" x="1098" y="387"/><text x="1098" y="373">15</text>
<use href="#m" x="1111" y="387"/><text x="1111" y="373">14</text>
<use href="#m" x="1138" y="387"/><text x="1138" y="373">12</text>
<use href="#m" x="1145" y="387"/><text x="1145" y="373">13</text>
<use href="#m" x="1124" y="391"/><text x="1124" y="377">11</text>
<use href="#m" x="1118" y="415"/><text x="1118" y="401">9</text>
<use href="#m" x="1122" y="406"/><text x="1122" y="392">8</text>
<use href="#m" x="1121" y="427"/><text x="1121" y="413">7</text>
<use href="#m" x="1089" y="429"/><text x="1089" y="415">16</text>
<use href="#m" x="1093" y="450"/><text x="1093" y="436">23</text>
<use href="#m" x="1088" y="448"/><text x="1088" y="434">24</text>
<use href="#m" x="1079" y="450"/><text x="1079" y="436">25</text>
<use href="#m" x="1118" y="451"/><text x="1118" y="437">10</text>
<use href="#m" x="1123" y="455"/><text x="1123" y="441">17</text>
<use href="#m" x="1125" y="458"/><text x="1125" y="444">18</text>
<use href="#m" x="1128" y="460"/><text x="1128" y="446">19</text>
<use href="#m" x="1106" y="471"/><text x="1106" y="457">21</text>
<use href="#m" x="1038" y="468"/><text x="1038" y="454">30</text>
<use href="#m" x="1064" y="468"/><text x="1064" y="454">26</text>
<use href="#m" x="1065" y="471"/><text x="1065" y="457">27</text>
<use href="#m" x="1057" y="471"/><text x="1057" y="457">28</text>
<use href="#m" x="1058" y="501"/><text x="1058" y="487">29</text>
</g>
<g class="M" fill="#af84f4">
<use href="#m" x="996" y="408"/><text x="996" y="394">1</text>
<use href="#m" x="995" y="428"/><text x="995" y="414">30</text>
<use href="#m" x="981" y="471"/><text x="981" y="457">2</text>
<use href="#m" x="992" y="475"/><text x="992" y="461">29</text>
<use href="#m" x="1022" y="494"/><text x="1022" y="480">28</text>
<use href="#m" x="1038" y="493"/><text x="1038" y="479">26</text>
<use href="#m" x="1043" y="496"/><text x="1043" y="482">27</text>
<use href="#m" x="990" y="506"/><text x="990" y="492">3</text>
<use href="#m" x="990" y="510"/><text x="990" y="496">4</text>
<use href="#m" x="993" y="520"/><text x="993" y="506">5</text>
<use href="#m" x="1055" y="535"/><text x="1055" y="521">25</text>
<use href="#m" x="1020" y="557"/><text x="1020" y="543">10</text>
<use href="#m" x="996" y="577"/><text x="996" y="563">6</text>
<use href="#m" x="997" y="568"/><text x="997" y="554">7</text>
<use href="#m" x="998" y="557"/><text x="998" y="543">8</text>
<use href="#m" x="1059" y="586"/><text x="1059" y="572">11</text>
<use href="#m" x="1097" y="575"/><text x="1097" y="561">12</text>
<use href="#m" x="1097" y="586"/><text x="1097" y="572">13</text>
<use href="#m" x="1101" y="610"/><text x="1101" y="596">14</text>
<use href="#m" x="1124" y="579"/><text x="1124" y="565">15</text>
<use href="#m" x="1138" y="583"/><text x="1138" y="569">18</text>
<use href="#m" x="1142" y="580"/><text x="1142" y="566">19</text>
<use href="#m" x="1126" y="600"/><text x="1126" y="586">16</text>
<use href="#m" x="1148" y="524"/><text x="1148" y="510">23</text>
<use href="#m" x="1142" y="536"/><text x="1142" y="522">24</text>
<use href="#m" x="1206" y="602"/><text x="1206" y="588">20</text>
<use href="#m" x="1367" y="661"/><text x="1367" y="647">22</text>
</g>
</svg>

<!-- map controls -->
<div class="bt" style="left:487px;top:86px;width:239px;height:24px;border-radius:4px"></div>
<div class="a" style="left:701px;top:86px;width:2px;height:24px;background:#ddd"></div>
<div class="t" style="left:497px;top:92px;font-size:11.500px;color:#222">Las vegas</div>
<svg class="a" style="left:682px;top:92px" width="10" height="10" viewBox="0 0 10 10"><circle cx="5" cy="5" r="5" fill="#bbb"/><path d="M3 3l4 4M7 3l-4 4" stroke="#fff" stroke-width="1"/></svg>
<svg class="a" style="left:707px;top:91px" width="13" height="13" viewBox="0 0 13 13"><circle cx="5" cy="5" r="4" fill="none" stroke="#888" stroke-width="1"/><path d="M8 8l4.500 4.500" stroke="#888" stroke-width="1"/></svg>

<div class="bt" style="left:736px;top:86px;width:74px;height:24px;border-radius:4px"></div>
<div class="a" style="left:760px;top:86px;width:1px;height:24px;background:#ddd"></div>
<div class="a" style="left:785px;top:86px;width:1px;height:24px;background:#ddd"></div>
<div class="bt" style="left:817px;top:86px;width:50px;height:24px;border-radius:4px"></div>
<div class="a" style="left:842px;top:86px;width:1px;height:24px;background:#ddd"></div>
<div class="bt" style="left:877px;top:86px;width:24px;height:24px;border-radius:4px"></div>
<svg class="a" style="left:736px;top:86px" width="165" height="24" viewBox="0 0 165 24" fill="none" stroke="#4f5c94" stroke-width="1">
<path d="M4 19L9 7 18 5 18 19Z"/><circle cx="4" cy="19" r="1.800" fill="#fff"/><circle cx="9" cy="7" r="1.800" fill="#fff"/><circle cx="18" cy="5" r="1.800" fill="#fff"/><circle cx="18" cy="19" r="1.800" fill="#fff"/>
<rect x="29" y="6" width="14" height="12"/><circle cx="29" cy="6" r="1.800" fill="#fff"/><circle cx="43" cy="6" r="1.800" fill="#fff"/><circle cx="29" cy="18" r="1.800" fill="#fff"/><circle cx="43" cy="18" r="1.800" fill="#fff"/>
<circle cx="61" cy="13" r="6.500"/><circle cx="61" cy="5.500" r="1.500" fill="#fff"/>
<path d="M85 8L96 10 86 15 93 19 85 19Z"/><circle cx="85" cy="8" r="1.800" fill="#fff"/><circle cx="85" cy="19" r="1.800" fill="#fff"/><circle cx="93" cy="19" r="1.800" fill="#fff"/>
<path d="M92 10l5-5 5 1-5 7z" fill="#3a4aa0" stroke="none"/>
<path d="M109 11a4.500 4.500 0 1 1 9 0c0 2-2.500 5-4.500 8-2-3-4.500-6-4.500-8z"/><circle cx="113.500" cy="11" r="1.500"/><path d="M115 9l6-5 5 1-6 7z" fill="#3a4aa0" stroke="none"/>
<rect x="143" y="8" width="17" height="7" fill="#8a8fb8" stroke="none"/><path d="M144 8v3M147 8v3M150 8v3M153 8v3M156 8v3M159 8v3" stroke="#fff"/>
</svg>

<div class="bt" style="left:1884px;top:86px;width:25px;height:25px;border-radius:4px"></div>
<svg class="a" style="left:1889px;top:91px" width="15" height="15" viewBox="0 0 15 15"><circle cx="7.500" cy="7.500" r="6.500" fill="none" stroke="#2a6a96" stroke-width="1.300"/><path d="M7.500 6.500v5" stroke="#2a6a96" stroke-width="1.800"/><circle cx="7.500" cy="4" r="1.100" fill="#2a6a96"/></svg>

<div class="a" style="left:1877px;top:560px;width:32px;height:32px;border-radius:50%;background:#fff"></div>
<div class="a" style="left:1877px;top:598px;width:32px;height:32px;border-radius:50%;background:#fff"></div>
<div class="a" style="left:1877px;top:636px;width:32px;height:32px;border-radius:50%;background:#fff"></div>
<svg class="a" style="left:1885px;top:568px" width="16" height="15" viewBox="0 0 16 15"><path d="M0 7.500L8 0l3 2.800V1h2v3.700L16 7.500l-1 1L8 2 1 8.500zM3 9l5-4.500L13 9v6H9.500v-4h-3v4H3z" fill="#1d5a85"/></svg>
<svg class="a" style="left:1885px;top:606px" width="16" height="16" viewBox="0 0 16 16"><circle cx="6.500" cy="6.500" r="5.300" fill="none" stroke="#1d5a85" stroke-width="1.800"/><path d="M10.500 10.500L15 15" stroke="#1d5a85" stroke-width="2.500"/><path d="M6.500 3.500v6M3.500 6.500h6" stroke="#1d5a85" stroke-width="1.500"/></svg>
<svg class="a" style="left:1885px;top:644px" width="16" height="16" viewBox="0 0 16 16"><circle cx="6.500" cy="6.500" r="5.300" fill="none" stroke="#1d5a85" stroke-width="1.800"/><path d="M10.500 10.500L15 15" stroke="#1d5a85" stroke-width="2.500"/><path d="M3.500 6.500h6" stroke="#1d5a85" stroke-width="1.500"/></svg>

<!-- bottom panel -->
<div class="a" style="left:478px;top:685px;width:1439px;height:268px;background:#fff;border-top:1px solid #ccc;box-sizing:border-box"></div>
<svg class="a" style="left:497px;top:699px" width="13" height="15" viewBox="0 0 13 15"><rect x=".7" y="2.500" width="11.600" height="11.800" fill="none" stroke="#3a6a96" stroke-width="1.200"/><path d="M1 2.500h11v2H1zM3.500 0v3M9.500 0v3M6.500 6.500v5M4 9h5" stroke="#3a6a96" stroke-width="1.200"/></svg>
<div class="t" style="left:513px;top:702px;font-size:12.900px;color:#a9d0f5">Planned visits</div>
<svg class="a" style="left:619px;top:699px" width="14" height="13" viewBox="0 0 14 13"><path d="M0 2h14M0 6.500h14M0 11h14" stroke="#33475b" stroke-width="1.200"/><rect x="8" y=".5" width="3" height="3" fill="#33475b"/><rect x="3" y="5" width="3" height="3" fill="#33475b"/><rect x="8" y="9.500" width="3" height="3" fill="#33475b"/></svg>
<div class="t" style="left:635px;top:701px;font-size:13px;color:#33475b">Timeline</div>
<svg class="a" style="left:1882px;top:697px;color:#b59a66" width="18" height="16" viewBox="0 0 18 16"><use href="#gr" x="0" y="3" width="12" height="12"/><use href="#gr" x="9" y="0" width="8" height="8"/><use href="#gr" x="9" y="8" width="8" height="8"/></svg>

<div class="a" style="left:480px;top:729px;width:1437px;height:23px;background:#f0f0f0"></div>
<div class="a" style="left:480px;top:752px;width:1437px;height:1.500px;background:#808080"></div>
<div class="a" style="left:480px;top:753px;width:1437px;height:37px;background:#f0f0f0"></div>
<div class="a" style="left:480px;top:790px;width:128px;height:151px;background:#f0f0f0"></div>
<div class="a" style="left:608px;top:826px;width:1309px;height:115px;background:#f0f0f0"></div>
<div class="t" style="left:519px;top:737px;font-size:11.400px;color:#333">Visit Info</div>
<div class="t" style="left:536px;top:757px;font-size:11px;color:#444">45</div>
<div class="t" style="left:525px;top:775px;font-size:11px;color:#444">minute</div>
<svg class="a" style="left:496px;top:767px" width="92" height="11" viewBox="0 0 92 11"><path d="M6 1L1.500 5.500 6 10zM86 1l4.500 4.500L86 10z" fill="#222"/></svg>
<div class="t tl" style="left:607px">07:00</div>
<div class="tk" style="left:702px"></div><div class="t tl" style="left:703px">07:45</div>
<div class="tk" style="left:798px"></div><div class="t tl" style="left:799px">08:30</div>
<div class="tk" style="left:894px"></div><div class="t tl" style="left:895px">09:15</div>
<div class="tk" style="left:990px"></div><div class="t tl" style="left:991px">10:00</div>
<div class="tk" style="left:1086px"></div><div class="t tl" style="left:1087px">10:45</div>
<div class="tk" style="left:1182px"></div><div class="t tl" style="left:1183px">11:30</div>
<div class="tk" style="left:1278px"></div><div class="t tl" style="left:1279px">12:15</div>
<div class="tk" style="left:1374px"></div><div class="t tl" style="left:1375px">13:00</div>
<div class="tk" style="left:1470px"></div><div class="t tl" style="left:1471px">13:45</div>
<div class="tk" style="left:1566px"></div><div class="t tl" style="left:1567px">14:30</div>
<div class="tk" style="left:1662px"></div><div class="t tl" style="left:1663px">15:00</div>
<div class="tk" style="left:1758px"></div>
<div class="t tn" style="left:493px;top:803px">Technician_1</div>
<div class="t tn" style="left:493px;top:842px">Technician_3</div>
<div class="t tn" style="left:493px;top:880px">Technician_2</div>
<div class="t tn" style="left:493px;top:918px">Technician_4</div>

<!-- block lefts are relative to x=608 -->
<div class="r r1" style="top:790px;height:36px"><i style="top:16px;width:1075px"></i>
<b style="left:128px;top:5px"></b><b style="left:167px;top:5px">1</b><b style="left:199px;top:5px">2</b><b style="left:226px;top:5px">3</b><b style="left:249px;top:5px">4</b><b style="left:276px;top:5px">5</b><b style="left:324px;top:5px">6</b><b style="left:353px;top:5px">7</b><b style="left:388px;top:5px">8</b><b style="left:418px;top:5px">9</b><b style="left:442px;top:5px">10</b><b style="left:471px;top:5px">11</b><b style="left:506px;top:5px">12</b><b style="left:536px;top:5px">13</b><b style="left:562px;top:5px">14</b><b style="left:588px;top:5px">15</b><b style="left:626px;top:5px">16</b><b style="left:653px;top:5px">17</b><b style="left:681px;top:5px">18</b><b style="left:708px;top:5px">19</b><b style="left:737px;top:5px">20</b><b style="left:766px;top:5px">21</b><b style="left:799px;top:5px">22</b><b style="left:825px;top:5px">23</b><b style="left:852px;top:5px">24</b><b style="left:882px;top:5px">25</b><b style="left:918px;top:5px">26</b><b style="left:957px;top:5px">27</b><b style="left:982px;top:5px">28</b><b style="left:1009px;top:5px">29</b><b style="left:1031px;top:5px">30</b><b style="left:1075px;top:5px"></b></div>

<div class="r r2" style="top:828px;height:36px"><i style="top:16px;width:972px"></i>
<b style="left:128px;top:5px"></b><b style="left:151px;top:5px">1</b><b style="left:173px;top:5px">2</b><b style="left:197px;top:5px">3</b><b style="left:222px;top:5px">4</b><b style="left:250px;top:5px">5</b><b style="left:276px;top:5px">6</b><b style="left:302px;top:5px">7</b><b style="left:328px;top:5px">8</b><b style="left:351px;top:5px">9</b><b style="left:375px;top:5px">10</b><b style="left:396px;top:5px">11</b><b style="left:422px;top:5px">12</b><b style="left:443px;top:5px">13</b><b style="left:473px;top:5px">14</b><b style="left:499px;top:5px">15</b><b style="left:534px;top:5px">16</b><b style="left:566px;top:5px">17</b><b style="left:590px;top:5px">18</b><b style="left:613px;top:5px">19</b><b style="left:642px;top:5px">20</b><b style="left:664px;top:5px">21</b><b style="left:691px;top:5px">22</b><b style="left:713px;top:5px">23</b><b style="left:735px;top:5px">24</b><b style="left:759px;top:5px">25</b><b style="left:789px;top:5px">26</b><b style="left:815px;top:5px">27</b><b style="left:841px;top:5px">28</b><b style="left:874px;top:5px">29</b><b style="left:911px;top:5px">30</b><b style="left:972px;top:5px"></b></div>

<div class="r r3" style="top:866px;height:37px"><i style="top:17px;height:2px;width:1040px"></i>
<b style="left:128px;top:6px"></b><b style="left:147px;top:6px">1</b><b style="left:187px;top:6px">2</b><b style="left:218px;top:6px">3</b><b style="left:243px;top:6px">4</b><b style="left:265px;top:6px">5</b><b style="left:287px;top:6px">6</b><b style="left:346px;top:6px">7</b><b style="left:370px;top:6px">8</b><b style="left:398px;top:6px">9</b><b style="left:427px;top:6px">10</b><b style="left:452px;top:6px">11</b><b style="left:474px;top:6px">12</b><b style="left:502px;top:6px">13</b><b style="left:524px;top:6px">14</b><b style="left:555px;top:6px">15</b><b style="left:578px;top:6px">16</b><b style="left:614px;top:6px">17</b><b style="left:639px;top:6px">18</b><b style="left:667px;top:6px">19</b><b style="left:691px;top:6px">20</b><b style="left:734px;top:6px">21</b><b style="left:764px;top:6px">22</b><b style="left:801px;top:6px">23</b><b style="left:831px;top:6px">24</b><b style="left:856px;top:6px">25</b><b style="left:884px;top:6px">26</b><b style="left:908px;top:6px">27</b><b style="left:937px;top:6px">28</b><b style="left:962px;top:6px">29</b><b style="left:999px;top:6px">30</b><b style="left:1040px;top:6px"></b></div>

<div class="r r4" style="top:905px;height:36px"><i style="top:17px;width:1092px"></i>
<b style="left:128px;top:5px"></b><b style="left:149px;top:5px">1</b><b style="left:183px;top:5px">2</b><b style="left:218px;top:5px">3</b><b style="left:239px;top:5px">4</b><b style="left:266px;top:5px">5</b><b style="left:300px;top:5px">6</b><b style="left:326px;top:5px">7</b><b style="left:350px;top:5px">8</b><b style="left:374px;top:5px">9</b><b style="left:396px;top:5px">10</b><b style="left:426px;top:5px">11</b><b style="left:456px;top:5px">12</b><b style="left:484px;top:5px">13</b><b style="left:511px;top:5px">14</b><b style="left:542px;top:5px">15</b><b style="left:570px;top:5px">16</b><b style="left:596px;top:5px">17</b><b style="left:617px;top:5px">18</b><b style="left:641px;top:5px">19</b><b style="left:674px;top:5px">20</b><b style="left:717px;top:5px">21</b><b style="left:738px;top:5px">22</b><b style="left:794px;top:5px">23</b><b style="left:822px;top:5px">24</b><b style="left:860px;top:5px">25</b><b style="left:898px;top:5px">26</b><b style="left:927px;top:5px">27</b><b style="left:966px;top:5px">28</b><b style="left:1006px;top:5px">29</b><b style="left:1046px;top:5px">30</b><b style="left:1092px;top:5px"></b></div>

</body></html>
